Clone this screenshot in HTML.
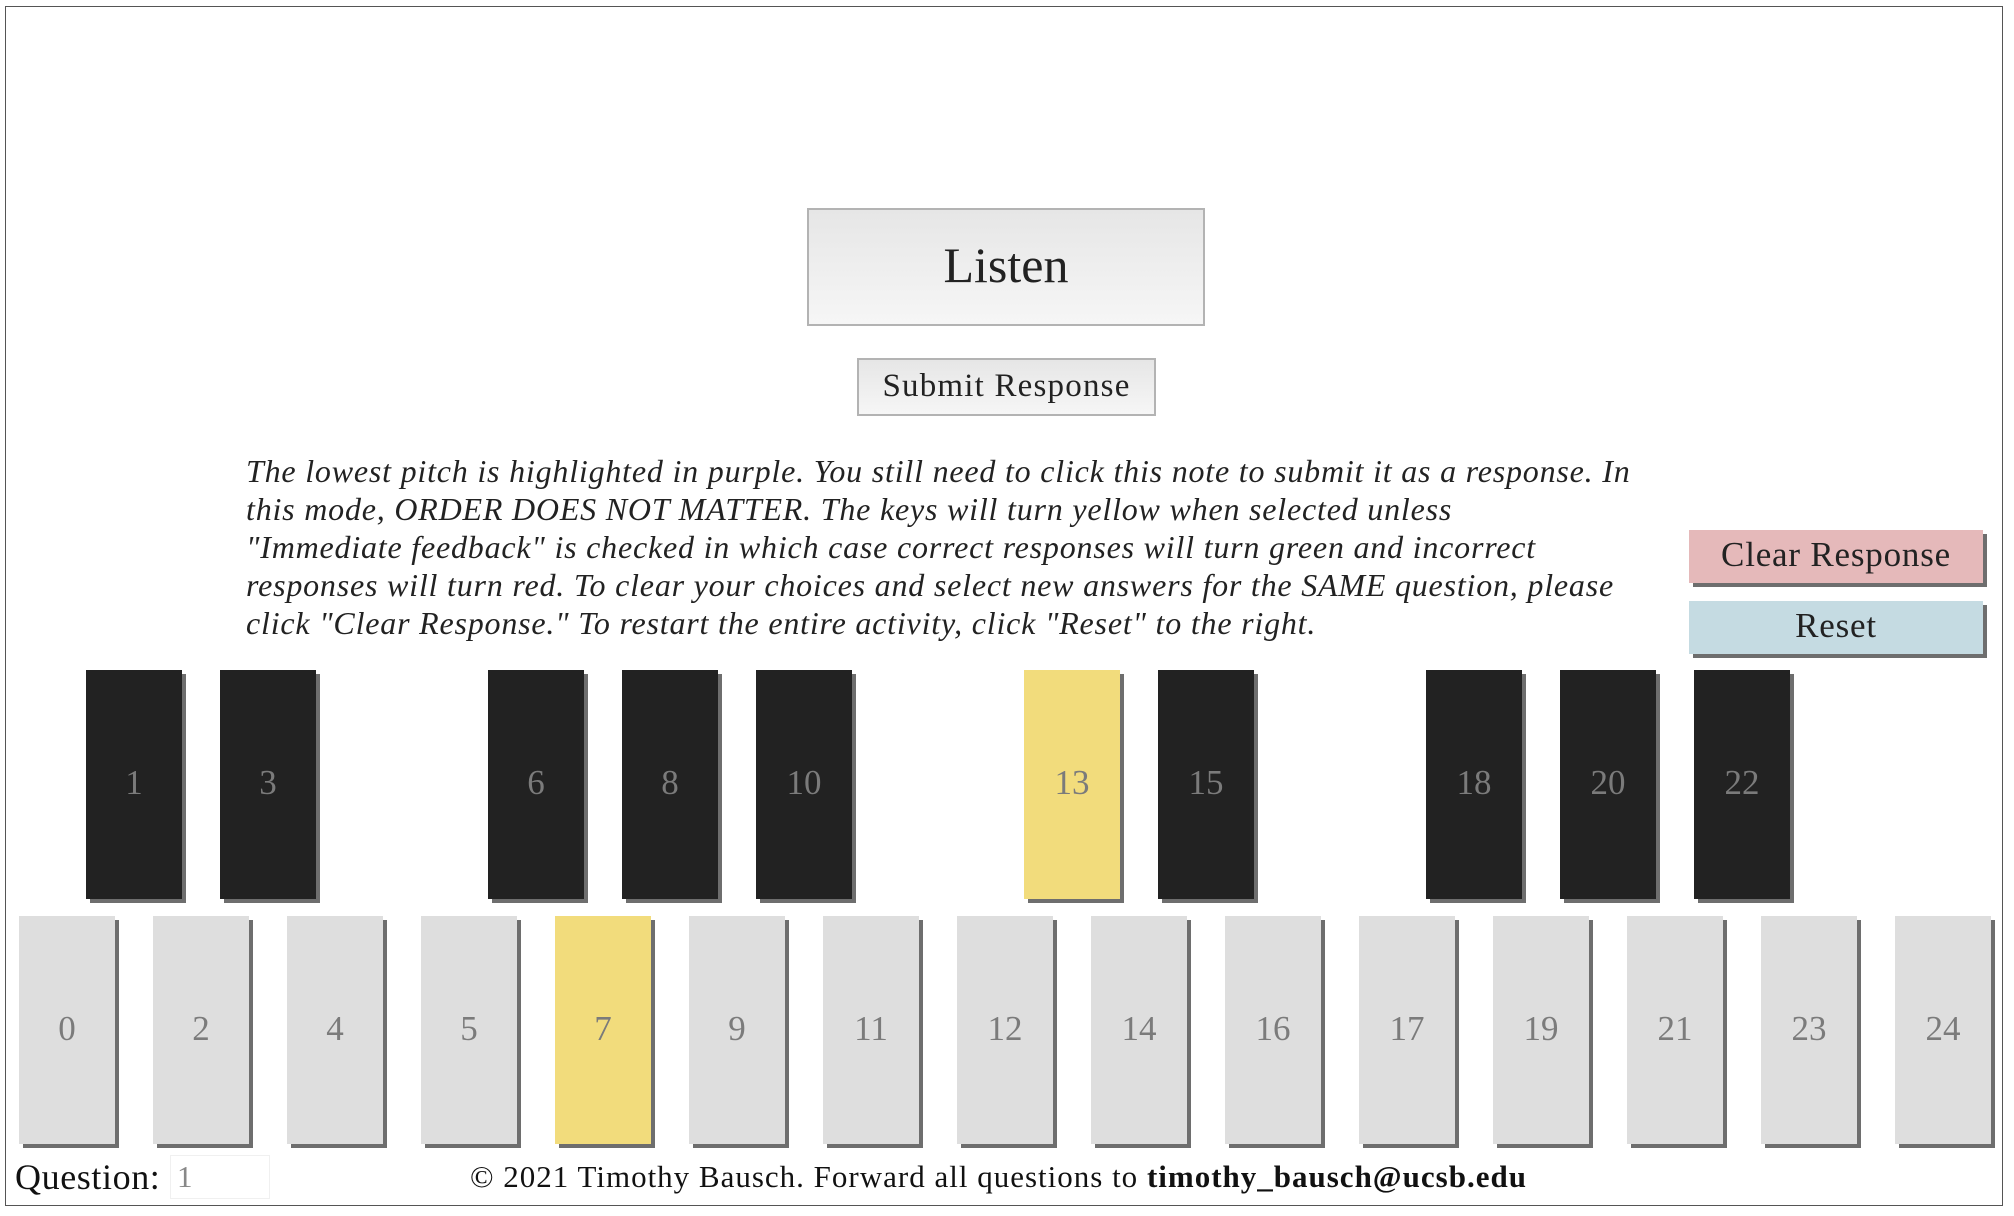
<!DOCTYPE html>
<html><head><meta charset="utf-8"><style>
html,body{margin:0;padding:0;background:#fff;}
body{width:2014px;height:1216px;position:relative;overflow:hidden;font-family:"Liberation Serif",serif;color:#222;}
.frame{position:absolute;left:5px;top:6px;width:1998px;height:1200px;border:1.5px solid #555;box-sizing:border-box;}
.btn{position:absolute;box-sizing:border-box;border:2px solid #b3b3b3;background:linear-gradient(#e6e6e6,#f6f6f6);text-align:center;color:#222;}
.k{position:absolute;box-shadow:4px 4px 0 #6e6e6e;color:#7b7b7b;font-size:35px;display:flex;align-items:center;justify-content:center;padding-bottom:3px;box-sizing:border-box;}
.w{top:916px;width:96px;height:228px;background:#dedede;}
.b{top:670px;width:96px;height:229px;background:#222;}
.y{background:#f2dc7c;}
.side{position:absolute;box-shadow:4px 4px 0 #6e6e6e;font-size:35px;letter-spacing:0.8px;color:#222;text-align:center;box-sizing:border-box;}
p{position:absolute;left:246px;top:452px;margin:0;font-style:italic;font-size:32px;letter-spacing:0.8px;line-height:38px;white-space:nowrap;}
</style></head><body>
<div class="frame"></div>
<div class="btn" style="left:807px;top:208px;width:398px;height:118px;font-size:50px;line-height:110px;">Listen</div>
<div class="btn" style="left:857px;top:358px;width:299px;height:58px;font-size:33px;letter-spacing:1.2px;line-height:52px;">Submit Response</div>
<p>The lowest pitch is highlighted in purple. You still need to click this note to submit it as a response. In<br>this mode, ORDER DOES NOT MATTER. The keys will turn yellow when selected unless<br>"Immediate feedback" is checked in which case correct responses will turn green and incorrect<br>responses will turn red. To clear your choices and select new answers for the SAME question, please<br>click "Clear Response." To restart the entire activity, click "Reset" to the right.</p>
<div class="side" style="left:1689px;top:530px;width:294px;height:53px;line-height:50px;background:#e5b9ba;">Clear Response</div>
<div class="side" style="left:1689px;top:601px;width:294px;height:53px;line-height:50px;background:#c5dbe2;">Reset</div>

<div class="k b" style="left:86px">1</div>
<div class="k b" style="left:220px">3</div>
<div class="k b" style="left:488px">6</div>
<div class="k b" style="left:622px">8</div>
<div class="k b" style="left:756px">10</div>
<div class="k b y" style="left:1024px">13</div>
<div class="k b" style="left:1158px">15</div>
<div class="k b" style="left:1426px">18</div>
<div class="k b" style="left:1560px">20</div>
<div class="k b" style="left:1694px">22</div>

<div class="k w" style="left:19px">0</div>
<div class="k w" style="left:153px">2</div>
<div class="k w" style="left:287px">4</div>
<div class="k w" style="left:421px">5</div>
<div class="k w y" style="left:555px">7</div>
<div class="k w" style="left:689px">9</div>
<div class="k w" style="left:823px">11</div>
<div class="k w" style="left:957px">12</div>
<div class="k w" style="left:1091px">14</div>
<div class="k w" style="left:1225px">16</div>
<div class="k w" style="left:1359px">17</div>
<div class="k w" style="left:1493px">19</div>
<div class="k w" style="left:1627px">21</div>
<div class="k w" style="left:1761px">23</div>
<div class="k w" style="left:1895px">24</div>

<div style="position:absolute;left:15px;top:1156px;font-size:36px;letter-spacing:0.6px;color:#111;">Question:</div>
<div style="position:absolute;left:170px;top:1155px;width:100px;height:44px;border:1px solid #f0f0f0;box-sizing:border-box;font-size:31px;color:#888;padding-left:6px;line-height:42px;">1</div>
<div style="position:absolute;left:470px;top:1159px;font-size:31px;letter-spacing:1.0px;color:#111;white-space:nowrap;">© 2021 Timothy Bausch. Forward all questions to <b>timothy_bausch@ucsb.edu</b></div>
</body></html>
